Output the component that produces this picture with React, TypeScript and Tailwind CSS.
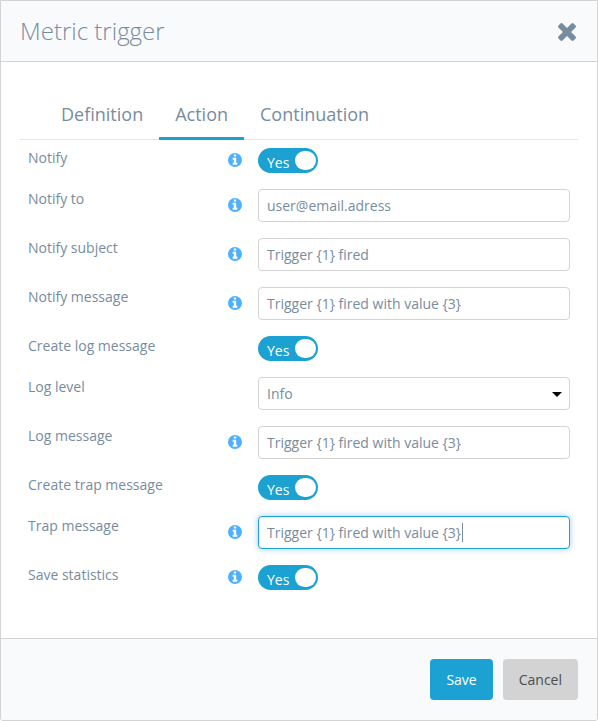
import React from "react";

type Field = {
  id: string;
  label: string;
  kind: "toggle" | "text" | "select";
  info: boolean;
  value?: string;
  active?: boolean;
};

const message = "Trigger {1} fired with value {3}";

const fields: Field[] = [
  { id: "notify", label: "Notify", kind: "toggle", info: true },
  { id: "notify-to", label: "Notify to", kind: "text", info: true, value: "user@email.adress" },
  { id: "notify-subject", label: "Notify subject", kind: "text", info: true, value: "Trigger {1} fired" },
  { id: "notify-message", label: "Notify message", kind: "text", info: true, value: message },
  { id: "create-log", label: "Create log message", kind: "toggle", info: false },
  { id: "log-level", label: "Log level", kind: "select", info: false },
  { id: "log-message", label: "Log message", kind: "text", info: true, value: message },
  { id: "create-trap", label: "Create trap message", kind: "toggle", info: false },
  { id: "trap-message", label: "Trap message", kind: "text", info: true, value: message, active: true },
  { id: "save-statistics", label: "Save statistics", kind: "toggle", info: true },
];

function InfoIcon() {
  return (
    <svg className="size-3.5" viewBox="128 128 1536 1536" aria-hidden="true">
      <circle cx="896" cy="896" r="768" fill="#4db1ff" />
      <path
        fill="#fff"
        d="M1152 1376v-160q0-14-9-23t-23-9h-96v-512q0-14-9-23t-23-9h-320q-14 0-23 9t-9 23v160q0 14 9 23t23 9h96v320h-96q-14 0-23 9t-9 23v160q0 14 9 23t23 9h448q14 0 23-9t9-23zM1024 480v-160q0-14-9-23t-23-9h-192q-14 0-23 9t-9 23v160q0 14 9 23t23 9h192q14 0 23-9t9-23z"
      />
    </svg>
  );
}

function CloseIcon() {
  return (
    <svg className="size-[18px]" viewBox="302 366 1188 1188" fill="currentColor" aria-hidden="true">
      <path d="M1490 1322q0 40-28 68l-136 136q-28 28-68 28t-68-28l-294-294-294 294q-28 28-68 28t-68-28l-136-136q-28-28-28-68t28-68l294-294-294-294q-28-28-28-68t28-68l136-136q28-28 68-28t68 28l294 294 294-294q28-28 68-28t68 28l136 136q28 28 28 68t-28 68l-294 294 294 294q28 28 28 68z" />
    </svg>
  );
}

function Toggle({ id }: { id: string }) {
  return (
    <label className="relative flex h-[25px] w-[60px] cursor-pointer items-center rounded-full bg-[#1ba1d2] pl-[9px] pt-1 text-sm font-medium text-white">
      <input id={id} type="checkbox" defaultChecked className="sr-only" />
      Yes
      <span className="absolute right-0.5 top-[3px] h-[19px] w-[21px] rounded-full bg-white" />
    </label>
  );
}

function TextField({ field }: { field: Field }) {
  const base = "h-[33px] w-full rounded border bg-white px-2 text-sm outline-none";
  if (!field.active) {
    return <input id={field.id} type="text" defaultValue={field.value} className={base + " border-[#d3d3d3]"} />;
  }
  return (
    <div className="relative">
      <input
        id={field.id}
        type="text"
        autoFocus
        defaultValue={field.value}
        className={base + " border-[#1ba1d2] caret-transparent shadow-[0_0_6px_rgba(90,170,250,0.6)]"}
      />
      <span className="absolute left-[204px] top-[7px] h-[19px] w-px bg-[#788ca0]" />
    </div>
  );
}

function SelectField({ id }: { id: string }) {
  return (
    <div className="relative">
      <select
        id={id}
        defaultValue="Info"
        className="h-[33px] w-full appearance-none rounded border border-[#d3d3d3] bg-white px-2 text-sm outline-none"
      >
        <option>Info</option>
      </select>
      <svg className="pointer-events-none absolute right-2 top-[15px] h-[5px] w-[10px]" viewBox="0 0 10 5" aria-hidden="true">
        <path d="M0 0h10L5 5z" fill="#000" />
      </svg>
    </div>
  );
}

function Row({ field }: { field: Field }) {
  return (
    <div className="flex items-center">
      <label htmlFor={field.id} className="w-[200px] self-start text-sm leading-5">
        {field.label}
      </label>
      <div className="w-[30px] pb-0.5">{field.info && <InfoIcon />}</div>
      <div className="flex-1">
        {field.kind === "toggle" && <Toggle id={field.id} />}
        {field.kind === "text" && <TextField field={field} />}
        {field.kind === "select" && <SelectField id={field.id} />}
      </div>
    </div>
  );
}

export default function App() {
  return (
    <div className="overflow-hidden rounded-b-[3px] border border-[#d3d3d3] bg-white font-['Open_Sans',sans-serif] text-[#788ca0]">
      <header className="flex h-[61px] items-center justify-between border-b border-[#d3d3d3] bg-[#f9fafc] pl-[19px] pr-[21px]">
        <h1 className="text-2xl font-light">Metric trigger</h1>
        <button type="button" aria-label="Close" className="cursor-pointer pt-0.5">
          <CloseIcon />
        </button>
      </header>

      <main className="px-[19px] pb-12 pt-7">
        <nav className="flex border-b border-[#e6e6e6] pl-[25px] text-lg leading-7">
          <button type="button" className="-mb-px cursor-pointer border-b-3 border-transparent px-4 pb-[9px] pt-2.5">
            Definition
          </button>
          <button type="button" className="-mb-px cursor-pointer border-b-3 border-[#1ba1d2] px-4 pb-[9px] pt-2.5">
            Action
          </button>
          <button type="button" className="-mb-px cursor-pointer border-b-3 border-transparent px-4 pb-[9px] pt-2.5">
            Continuation
          </button>
        </nav>
        <form className="flex flex-col gap-4 px-2 pt-2">
          {fields.map((field) => (
            <Row key={field.id} field={field} />
          ))}
        </form>
      </main>

      <footer className="flex justify-end gap-2.5 border-t border-[#d3d3d3] bg-[#f9fafc] px-[19px] py-5 text-sm">
        <button type="button" className="h-[41px] cursor-pointer rounded bg-[#1ba1d2] px-4 font-medium text-white">
          Save
        </button>
        <button type="button" className="h-[41px] cursor-pointer rounded bg-[#d3d3d3] px-4 text-[#4d4d4d]">
          Cancel
        </button>
      </footer>
    </div>
  );
}
